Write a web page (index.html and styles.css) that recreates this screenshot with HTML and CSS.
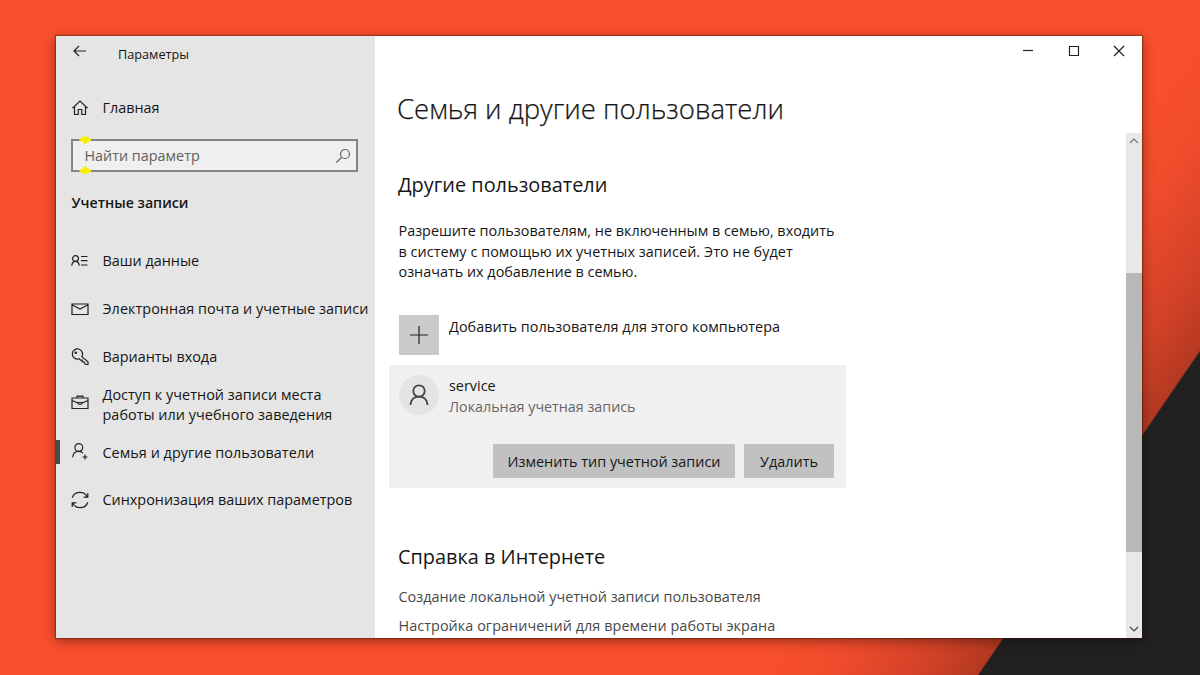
FILE: index.html
```html
<!DOCTYPE html>
<html lang="ru">
<head>
<meta charset="utf-8">
<title>Параметры</title>
<link rel="stylesheet" href="styles.css">
</head>
<body>
<main class="window">
  <aside class="sidebar">
    <header class="titlebar">
      <svg class="back" width="14" height="12" viewBox="0 0 14 12"><path d="M13 6H1.200M6 1 1 6l5 5"/></svg>
      <span class="app-name">Параметры</span>
    </header>
    <div class="row home">
      <svg class="icon" width="18" height="18" viewBox="0 0 18 18"><path d="M1.500 9.200 9 2l7.500 7.200M3.500 7.600V15.500H7.200V10.500H10.800V15.500H14.500V7.600"/></svg>
      <span>Главная</span>
    </div>
    <div class="search">
      <span>Найти параметр</span>
      <svg width="16" height="16" viewBox="0 0 16 16"><circle cx="10" cy="6" r="4.500"/><path d="M6.800 9.200 1.300 14.500"/></svg>
      <i class="mark mark-top"></i><i class="mark mark-bottom"></i>
    </div>
    <h2 class="category">Учетные записи</h2>
    <nav class="menu">
      <a class="row"><svg class="icon" width="18" height="18" viewBox="0 0 18 18"><circle cx="4.500" cy="6.500" r="2.900"/><path d="M.8 13.800c.2-2.900 1.500-4.400 3.700-4.400s3.500 1.500 3.700 4.400M10 4.500h6.500M10 8.700h6.500M10 13h6.500"/></svg><span>Ваши данные</span></a>
      <a class="row"><svg class="icon" width="18" height="18" viewBox="0 0 18 18"><path d="M1 4h16v10.500H1zM1 4.800l8 4.200L17 4.800"/></svg><span class="wide">Электронная почта и учетные записи</span></a>
      <a class="row"><svg class="icon" width="18" height="18" viewBox="0 0 18 18"><path d="M10.800 8.600a5.100 5.100 0 1 0-2.700 2.200l1.400 1.300h1.700v1.800h1.800l1.500 2.600h2.500v-2.700z"/><circle cx="4.800" cy="4.800" r=".7"/></svg><span>Варианты входа</span></a>
      <a class="row two-line"><svg class="icon" width="18" height="18" viewBox="0 0 18 18"><path d="M1 4h16v10.500H1zM6 4V2.200h6V4M1 6.500l6 2.500M17 6.500 11 9M7 8.500h4v1.200q-2 1.200-4 0z"/></svg><span class="wide">Доступ к учетной записи места<br>работы или учебного заведения</span></a>
      <a class="row active"><svg class="icon" width="18" height="18" viewBox="0 0 18 18"><circle cx="7.800" cy="4.500" r="3.900"/><path d="M1.600 14.300c.4-3.600 2.600-5.900 6.200-5.900 1.800 0 3.200.6 4.300 1.700M14 11.500v5M11.500 14h5"/></svg><span class="wide">Семья и другие пользователи</span></a>
      <a class="row"><svg class="icon" width="18" height="18" viewBox="0 0 18 18"><path d="M1.200 6.800C2.300 3.400 5.300 1.300 9 1.300c3.200 0 5.900 1.700 7.300 4.700M16.800 2v4.200h-4.200M16.800 11.200c-1.100 3.400-4.100 5.500-7.800 5.500-3.200 0-5.900-1.700-7.300-4.700M1.200 16v-4.200h4.200"/></svg><span>Синхронизация ваших параметров</span></a>
    </nav>
  </aside>
  <section class="content">
    <header class="controls">
      <svg width="12" height="12" viewBox="0 0 12 12"><path d="M1 5.500h10"/></svg>
      <svg width="12" height="12" viewBox="0 0 12 12"><path d="M1.500 1.500h9v9h-9z"/></svg>
      <svg width="12" height="12" viewBox="0 0 12 12"><path d="M1 1l10 10M11 1 1 11"/></svg>
    </header>
    <h1 class="title">Семья и другие пользователи</h1>
    <div class="pane">
      <div class="page">
        <h2 class="subtitle">Другие пользователи</h2>
        <p class="intro">Разрешите пользователям, не включенным в семью, входить<br><span class="wider">в систему с помощью их учетных записей. Это не будет</span><br>означать их добавление в семью.</p>
        <div class="add">
          <span class="plus"><svg width="18" height="18" viewBox="0 0 18 18"><path d="M9 0v18M0 9h18"/></svg></span>
          <span class="wide">Добавить пользователя для этого компьютера</span>
        </div>
        <article class="user">
          <div class="user-info">
            <span class="avatar"><svg width="20" height="22" viewBox="0 0 20 22"><circle cx="10" cy="7" r="5.700"/><path d="M1.500 21c.5-5.500 3.500-8.300 8.500-8.300s8 2.800 8.500 8.300"/></svg></span>
            <div class="who"><div>service</div><div class="kind">Локальная учетная запись</div></div>
          </div>
          <div class="actions"><button class="change">Изменить тип учетной записи</button><button class="delete">Удалить</button></div>
        </article>
        <h2 class="subtitle help">Справка в Интернете</h2>
        <a class="link">Создание локальной учетной записи пользователя</a>
        <a class="link wider">Настройка ограничений для времени работы экрана</a>
      </div>
      <div class="scrollbar">
        <svg width="10" height="6" viewBox="0 0 10 6"><path d="M1 5l4-4 4 4"/></svg>
        <span class="thumb"></span>
        <svg class="down" width="10" height="6" viewBox="0 0 10 6"><path d="M1 1l4 4 4-4"/></svg>
      </div>
    </div>
  </section>
</main>
</body>
</html>
```
FILE: styles.css
```css
* { box-sizing: border-box; }
body {
  margin: 0;
  width: 1200px;
  height: 675px;
  overflow: hidden;
  padding: 36px 58px 37px 56px;
  font: 14.4px/20px "Open Sans", "Noto Sans", sans-serif;
  white-space: nowrap;
  color: #161616;
  background: linear-gradient(124.4deg, #f94f2d 0 73%, #f04c2c 77.5%, #d34228 83%, #b43921 86.6%, #212121 86.7%);
}
svg { fill: none; stroke: #222; stroke-width: 1.2; flex: none; display: block; }
h1, h2, p { margin: 0; font-weight: 400; }
.wide { letter-spacing: .04px; }
.wider { letter-spacing: .06px; }
.window {
  height: 602px;
  display: grid;
  grid-template-columns: 319px 1fr;
  background: #fff;
  box-shadow: 0 0 1px 1px rgba(60, 20, 10, .4), 0 3px 12px rgba(0, 0, 0, .4);
}
.sidebar { background: #e5e5e5; }
.titlebar { display: flex; height: 48px; padding: 9px 0 0 17px; }
.app-name { margin: -1px 0 0 31px; font-size: 12.7px; }
.row { display: flex; align-items: center; height: 47.800px; padding-left: 15px; gap: 13.5px; }
.home { height: 48px; }
.search {
  position: relative;
  display: flex; align-items: center; justify-content: space-between;
  width: 287px; height: 33px; margin: 7.400px 0 0 15.400px; padding: 0 5px 0 11px;
  border: 2px solid #858585; background: #efefef; color: #606060;
}
.search svg { stroke: #666; }
.mark { position: absolute; left: 6px; width: 12px; height: 8px; background: #f6f000; clip-path: polygon(0 35%, 25% 8%, 50% 0, 75% 8%, 100% 35%, 100% 50%, 75% 65%, 50% 100%, 25% 65%, 0 50%); }
.mark-top { top: -5px; }
.mark-bottom { bottom: -4px; transform: scaleY(-1); }
.category { margin: 20.600px 0 0 15.500px; font-size: 14.2px; font-weight: 600; }
.menu { margin-top: 24.600px; }
.two-line .icon { margin-top: -3px; }
.active { position: relative; }
.active .icon { margin-top: -2px; }
.active::before { content: ""; position: absolute; left: 0; top: 11px; width: 4px; height: 24px; background: #4a4a4a; }
.content { display: flex; flex-direction: column; min-width: 0; min-height: 0; }
.controls { display: flex; justify-content: flex-end; gap: 33.500px; height: 48px; padding: 9px 17px 0 0; }
.title { height: 49px; padding-left: 22px; font-size: 27.5px; line-height: 49px; font-weight: 300; -webkit-text-stroke: .25px #161616; }
.pane { display: flex; flex: 1; min-height: 0; overflow: hidden; }
.page { flex: 1; padding: 38px 0 0 14px; }
.subtitle { padding-left: 9px; font-size: 19.9px; line-height: 28px; }
.intro { margin: 22px 0 0 9.500px; line-height: 20.500px; }
.add { display: flex; gap: 10px; margin: 32px 0 0 10px; }
.add > :last-child { padding-top: 2px; }
.plus { display: grid; place-items: center; width: 40px; height: 40px; background: #cacaca; }
.user { width: 456.500px; height: 123.500px; margin-top: 10px; padding: 10px 11.500px 10px 10px; background: #f0f0f0; }
.user-info { display: flex; gap: 10px; }
.who { padding-top: 1.500px; line-height: 20.800px; height: 40px; }
.avatar { display: grid; place-items: center; width: 40px; height: 40px; border-radius: 50%; background: #e4e4e4; }
.avatar svg { stroke-width: 1.8; stroke: #444; }
.kind { color: #666; font-size: 14.3px; }
.actions { display: flex; justify-content: flex-end; gap: 9px; margin-top: 29.500px; }
button { height: 34px; padding: 2px 0 0; border: 0; background: #c1c1c1; font: inherit; color: inherit; }
.change { width: 242px; }
.delete { width: 90px; }
.help { margin-top: 55px; }
.link { display: block; margin: 16px 0 0 9.500px; color: #484848; }
.link + .link { margin-top: 9px; }
.scrollbar { display: flex; flex-direction: column; align-items: center; width: 16px; padding: 5px 0 6px; background: #e8e8e8; }
.scrollbar svg { stroke: #777; }
.thumb { width: 16px; height: 279px; margin-top: 129px; background: #b8b8b8; }
.scrollbar .down { margin-top: auto; stroke: #444; }
```
